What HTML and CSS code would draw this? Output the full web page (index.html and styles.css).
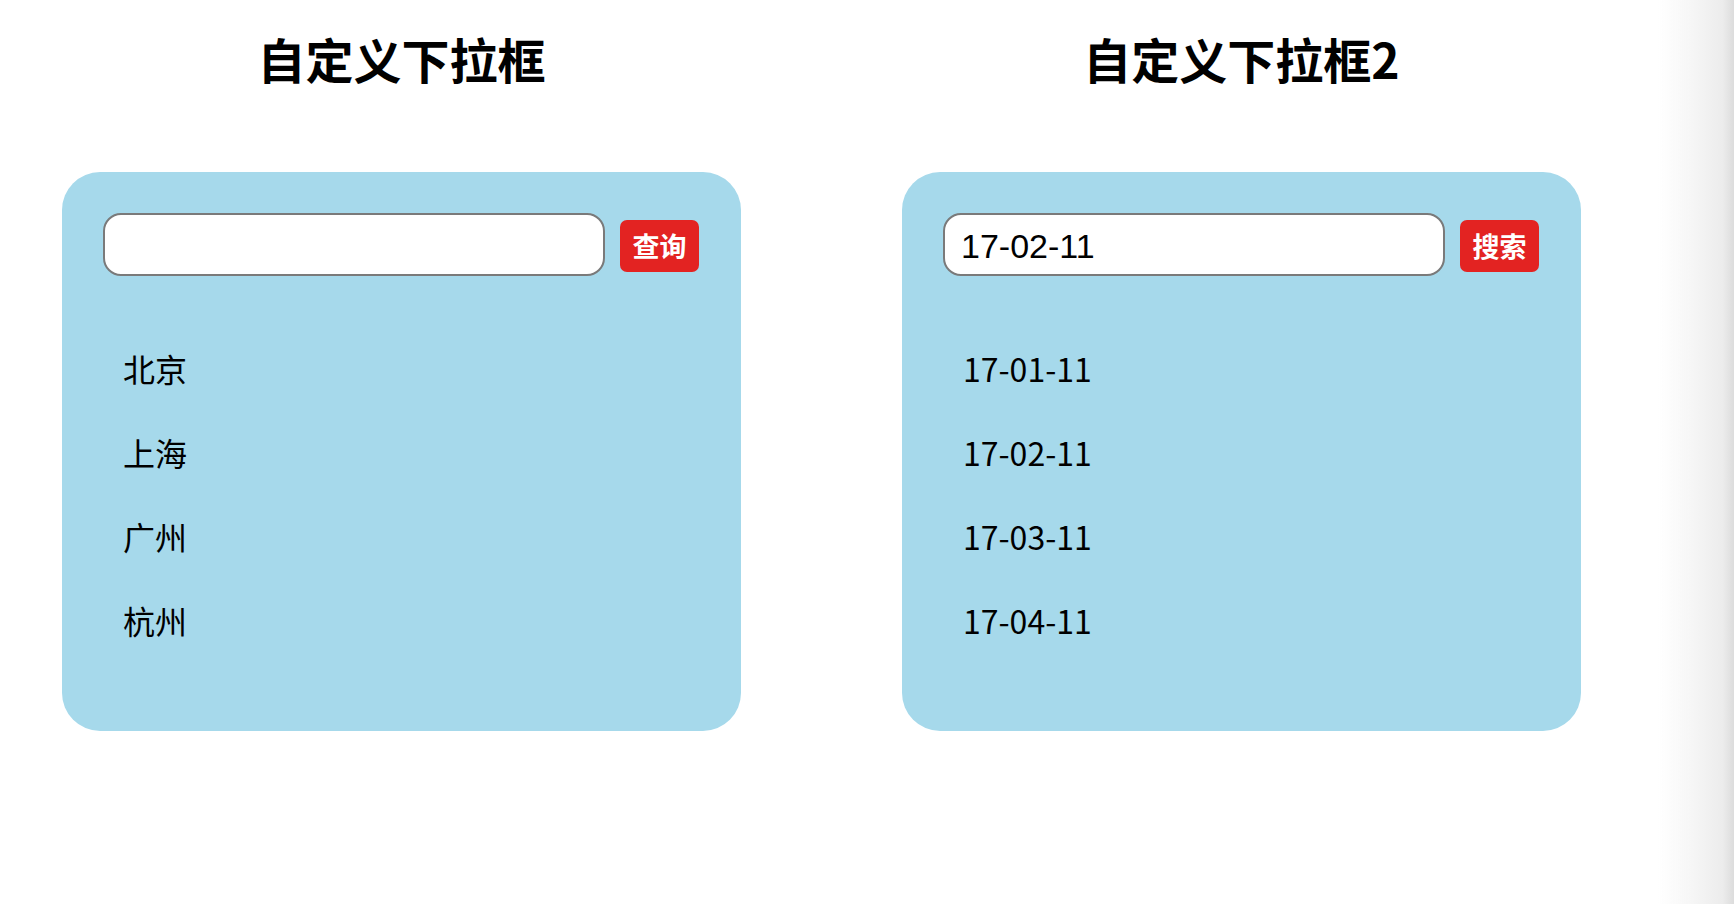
FILE: index.html
```html
<!DOCTYPE html>
<html lang="zh-CN">
<head>
<meta charset="utf-8">
<title>自定义下拉框</title>
<link rel="stylesheet" href="styles.css">
</head>
<body>
<div class="page">
  <section class="col">
    <h1 class="title">自定义下拉框</h1>
    <div class="panel">
      <div class="search">
        <input class="field" type="text" value="">
        <button class="btn">查询</button>
      </div>
      <ul class="list">
        <li>北京</li>
        <li>上海</li>
        <li>广州</li>
        <li>杭州</li>
      </ul>
    </div>
  </section>
  <section class="col">
    <h1 class="title">自定义下拉框2</h1>
    <div class="panel">
      <div class="search">
        <input class="field" type="text" value="17-02-11">
        <button class="btn">搜索</button>
      </div>
      <ul class="list">
        <li>17-01-11</li>
        <li>17-02-11</li>
        <li>17-03-11</li>
        <li>17-04-11</li>
      </ul>
    </div>
  </section>
</div>
<div class="edge"></div>
</body>
</html>
```
FILE: styles.css
```css
html, body {
  margin: 0;
  padding: 0;
  height: 100%;
}
body {
  background: #fff;
  font-family: "Liberation Sans", "Noto Sans CJK SC", sans-serif;
  color: #000;
}
.page {
  display: flex;
  gap: 161px;
  padding-left: 62px;
}
.col {
  width: 679px;
}
.title {
  margin: 29px 0 84px;
  height: 59px;
  line-height: 59px;
  text-align: center;
  font-family: "Noto Sans CJK SC", sans-serif;
  font-size: 48px;
  font-weight: 700;
}
.panel {
  box-sizing: border-box;
  height: 559px;
  padding: 41px 42px 0 41px;
  background: #a6d9eb;
  border-radius: 38px;
}
.search {
  display: flex;
  align-items: flex-start;
  gap: 15px;
}
.field {
  box-sizing: border-box;
  width: 502px;
  height: 63px;
  padding: 4px 16px 0;
  border: 2px solid #7a7a7a;
  border-radius: 18px;
  background: #fff;
  font-family: "Liberation Sans", sans-serif;
  font-size: 34px;
  color: #000;
  outline: none;
}
.btn {
  box-sizing: border-box;
  width: 79px;
  height: 52px;
  margin-top: 7px;
  padding: 0;
  border: none;
  border-radius: 7px;
  background: #e32322;
  color: #fff;
  font-family: "Noto Sans CJK SC", sans-serif;
  font-size: 27px;
  font-weight: 700;
  line-height: 52px;
}
.list {
  list-style: none;
  margin: 50px 0 0;
  padding: 0 0 0 20px;
}
.list li {
  height: 84px;
  line-height: 84px;
  font-family: "Noto Sans CJK SC", sans-serif;
  font-size: 32px;
}
.edge {
  position: fixed;
  top: 0;
  right: 0;
  width: 76px;
  height: 100%;
  background: linear-gradient(to right, rgba(255,255,255,0) 0%, #f6f6f6 45%, #ececec 85%, #dcdcdc 100%);
}
```
